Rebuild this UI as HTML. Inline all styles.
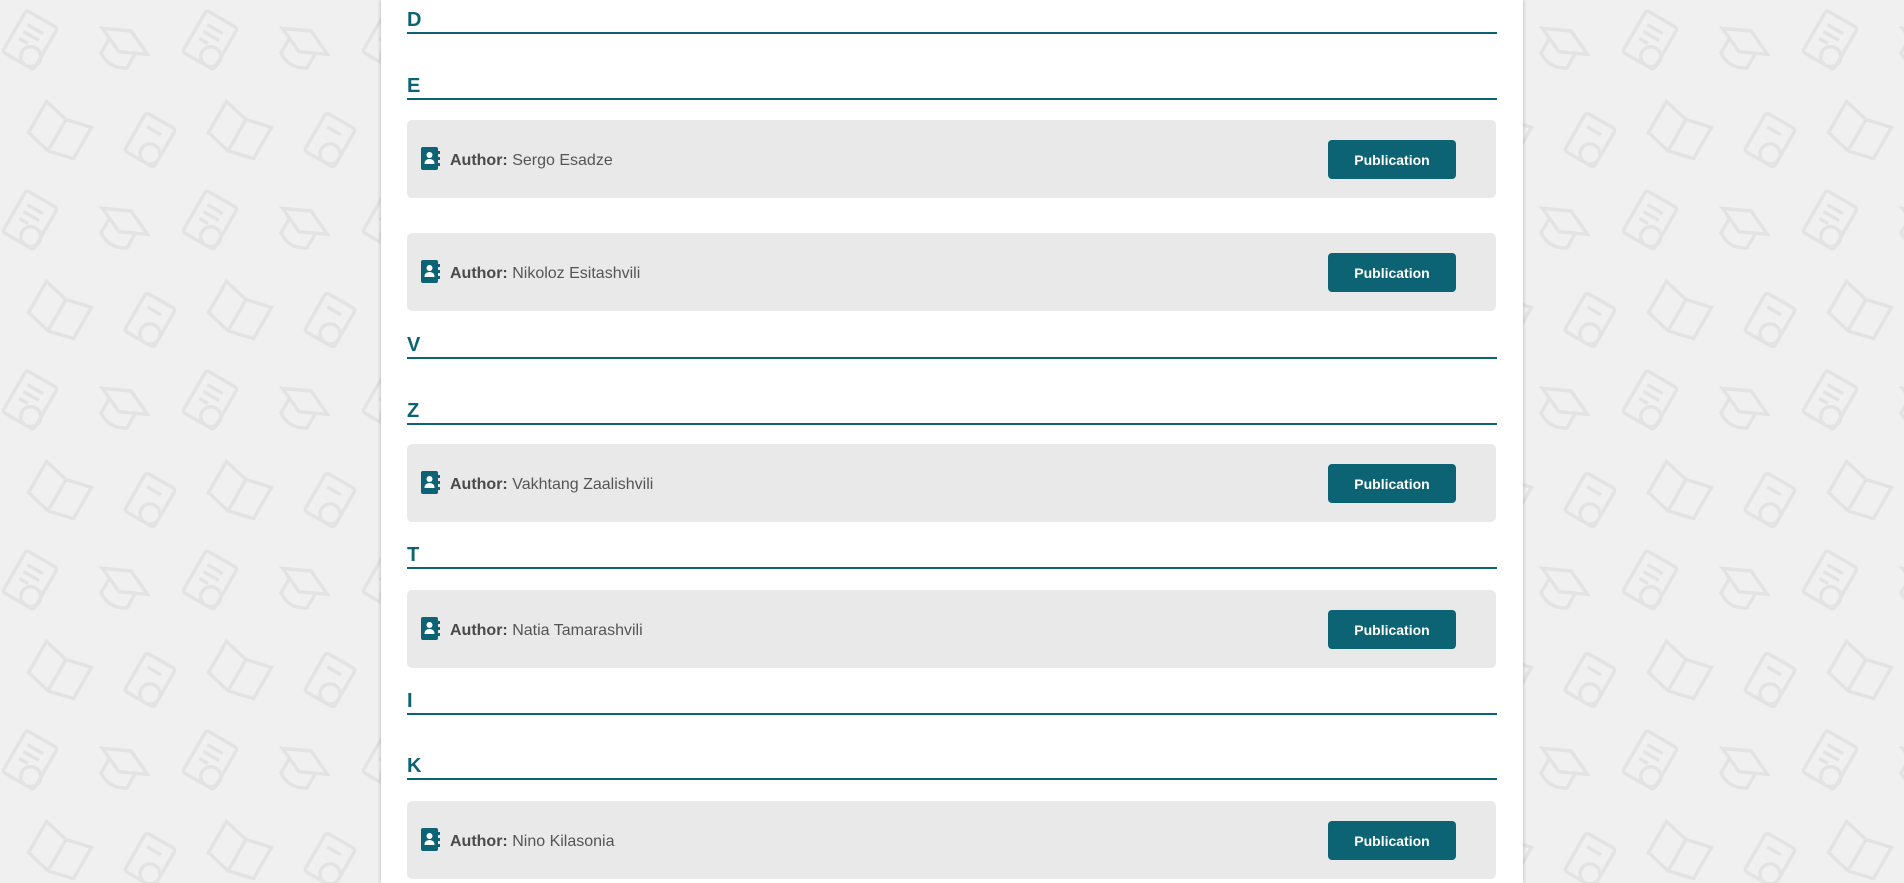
<!DOCTYPE html>
<html><head><meta charset="utf-8"><style>
html,body{margin:0;padding:0;width:1904px;height:883px;overflow:hidden;font-family:"Liberation Sans",sans-serif;}
body{background:#f0f0f0;position:relative;}
.bg{position:absolute;inset:0;}
.panel{position:absolute;left:381px;top:0;width:1142px;height:883px;background:#fff;box-shadow:0 0 4px rgba(0,0,0,0.25);}
.h{position:absolute;left:26px;width:1090px;border-bottom:2px solid #0b6373;color:#0b6373;font-weight:bold;font-size:20px;line-height:20px;height:22px;}
.h span{position:absolute;left:0;bottom:2px;}
.card{position:absolute;left:26px;width:1089px;height:78px;background:#e9e9e9;border-radius:5px;}
.ic{position:absolute;left:14px;top:27px;}
.t{position:absolute;left:43px;top:31px;font-size:16px;color:#555;line-height:20px;}
.t b{color:#4a4a4a;}
.btn{position:absolute;left:921px;top:20px;width:128px;height:39px;background:#0b6373;border-radius:4px;color:#fff;font-weight:bold;font-size:14px;line-height:40px;text-align:center;}
</style></head><body>
<svg class="bg" width="1904" height="883" xmlns="http://www.w3.org/2000/svg">
<defs><pattern id="p" width="180" height="180" patternUnits="userSpaceOnUse">
<g fill="none" stroke="#e3e3e3" stroke-width="3.5">
<g transform="translate(30,40) rotate(30)"><rect x="-18" y="-24" width="36" height="48" rx="3"/><circle cx="9" cy="14" r="10"/><line x1="-10" y1="-12" x2="8" y2="-12"/><line x1="-10" y1="-4" x2="8" y2="-4"/><line x1="-10" y1="4" x2="0" y2="4"/></g>
<g transform="translate(120,50) rotate(30)"><path d="M-26 -10 L0 -22 L26 -10 L0 2 Z M-15 -5 V12 Q0 22 15 12 V-5"/></g>
<g transform="translate(60,130) rotate(30)"><path d="M-26 -18 L0 -12 L26 -18 V18 L0 24 L-26 18 Z M0 -12 V24"/></g>
<g transform="translate(150,140) rotate(30)"><rect x="-17" y="-22" width="34" height="44" rx="3"/><circle cx="7" cy="12" r="10"/><line x1="-9" y1="-10" x2="7" y2="-10"/></g>
</g></pattern></defs>
<rect width="1904" height="883" fill="url(#p)"/>
</svg>
<div class="panel">
<div class="h" style="top:10px"><span>D</span></div>
<div class="h" style="top:76px"><span>E</span></div>
<div class="card" style="top:120px"><svg class="ic" width="19" height="23" viewBox="0 0 19 23"><rect x="0" y="0" width="17" height="23" rx="2" fill="#0b6373"/><rect x="16" y="4" width="3" height="3" fill="#0b6373"/><rect x="16" y="10" width="3" height="3" fill="#0b6373"/><rect x="16" y="16" width="3" height="3" fill="#0b6373"/><circle cx="8.5" cy="8" r="3" fill="#fff"/><path d="M3.5 17 Q3.5 12 8.5 12 Q13.5 12 13.5 17 Z" fill="#fff"/></svg><div class="t"><b>Author:</b> Sergo Esadze</div><div class="btn">Publication</div></div>
<div class="card" style="top:233px"><svg class="ic" width="19" height="23" viewBox="0 0 19 23"><rect x="0" y="0" width="17" height="23" rx="2" fill="#0b6373"/><rect x="16" y="4" width="3" height="3" fill="#0b6373"/><rect x="16" y="10" width="3" height="3" fill="#0b6373"/><rect x="16" y="16" width="3" height="3" fill="#0b6373"/><circle cx="8.5" cy="8" r="3" fill="#fff"/><path d="M3.5 17 Q3.5 12 8.5 12 Q13.5 12 13.5 17 Z" fill="#fff"/></svg><div class="t"><b>Author:</b> Nikoloz Esitashvili</div><div class="btn">Publication</div></div>
<div class="h" style="top:335px"><span>V</span></div>
<div class="h" style="top:401px"><span>Z</span></div>
<div class="card" style="top:444px"><svg class="ic" width="19" height="23" viewBox="0 0 19 23"><rect x="0" y="0" width="17" height="23" rx="2" fill="#0b6373"/><rect x="16" y="4" width="3" height="3" fill="#0b6373"/><rect x="16" y="10" width="3" height="3" fill="#0b6373"/><rect x="16" y="16" width="3" height="3" fill="#0b6373"/><circle cx="8.5" cy="8" r="3" fill="#fff"/><path d="M3.5 17 Q3.5 12 8.5 12 Q13.5 12 13.5 17 Z" fill="#fff"/></svg><div class="t"><b>Author:</b> Vakhtang Zaalishvili</div><div class="btn">Publication</div></div>
<div class="h" style="top:545px"><span>T</span></div>
<div class="card" style="top:590px"><svg class="ic" width="19" height="23" viewBox="0 0 19 23"><rect x="0" y="0" width="17" height="23" rx="2" fill="#0b6373"/><rect x="16" y="4" width="3" height="3" fill="#0b6373"/><rect x="16" y="10" width="3" height="3" fill="#0b6373"/><rect x="16" y="16" width="3" height="3" fill="#0b6373"/><circle cx="8.5" cy="8" r="3" fill="#fff"/><path d="M3.5 17 Q3.5 12 8.5 12 Q13.5 12 13.5 17 Z" fill="#fff"/></svg><div class="t"><b>Author:</b> Natia Tamarashvili</div><div class="btn">Publication</div></div>
<div class="h" style="top:691px"><span>I</span></div>
<div class="h" style="top:756px"><span>K</span></div>
<div class="card" style="top:801px"><svg class="ic" width="19" height="23" viewBox="0 0 19 23"><rect x="0" y="0" width="17" height="23" rx="2" fill="#0b6373"/><rect x="16" y="4" width="3" height="3" fill="#0b6373"/><rect x="16" y="10" width="3" height="3" fill="#0b6373"/><rect x="16" y="16" width="3" height="3" fill="#0b6373"/><circle cx="8.5" cy="8" r="3" fill="#fff"/><path d="M3.5 17 Q3.5 12 8.5 12 Q13.5 12 13.5 17 Z" fill="#fff"/></svg><div class="t"><b>Author:</b> Nino Kilasonia</div><div class="btn">Publication</div></div>
</div>
</body></html>
